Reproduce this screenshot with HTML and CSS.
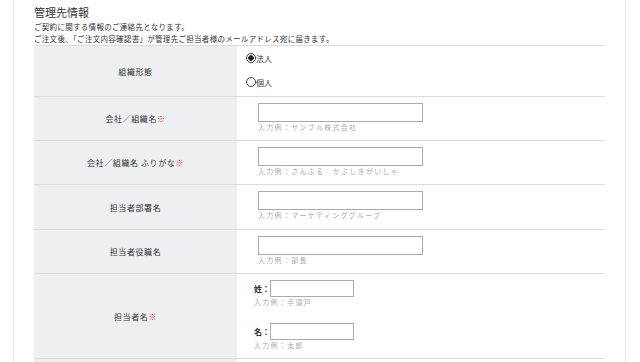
FILE: index.html
```html
<!DOCTYPE html>
<html>
<head>
<meta http-equiv="Content-Type" content="text/html; charset=UTF-8">
<meta name="viewport" content="width=device-width, initial-scale=1.0">
<title>管理先情報</title>
<link rel="stylesheet" href="styles.css">
</head>
<body>
<div class='page'>
    <h2 class='title'>管理先情報</h2>
    <p class='lead'>ご契約に関する情報のご連絡先となります。<br>ご注文後、「ご注文内容確認書」が管理先ご担当者様のメールアドレス宛に届きます。</p>

    <div class='form'>
        <div class='row row-type'>
            <div class='label'>組織形態</div>
            <div class='value radios'>
                <label><input type='radio' name='org_type' checked>法人</label>
                <label><input type='radio' name='org_type'>個人</label>
            </div>
        </div>
        <div class='row'>
            <div class='label'>会社／組織名<span class='req'>※</span></div>
            <div class='value'>
                <input class='text'>
                <div class='hint'>入力例：サンプル株式会社</div>
            </div>
        </div>
        <div class='row'>
            <div class='label'>会社／組織名 ふりがな<span class='req'>※</span></div>
            <div class='value'>
                <input class='text'>
                <div class='hint'>入力例：さんぷる　かぶしきがいしゃ</div>
            </div>
        </div>
        <div class='row row-tall'>
            <div class='label'>担当者部署名</div>
            <div class='value'>
                <input class='text'>
                <div class='hint'>入力例：マーケティンググループ</div>
            </div>
        </div>
        <div class='row'>
            <div class='label'>担当者役職名</div>
            <div class='value'>
                <input class='text'>
                <div class='hint'>入力例：部長</div>
            </div>
        </div>
        <div class='row row-name'>
            <div class='label'>担当者名<span class='req'>※</span></div>
            <div class='value names'>
                <div class='name'>
                    <span class='name-key'>姓：</span><input class='text short'>
                    <div class='hint'>入力例：手須戸</div>
                </div>
                <div class='name'>
                    <span class='name-key'>名：</span><input class='text short'>
                    <div class='hint'>入力例：太郎</div>
                </div>
            </div>
        </div>
        <div class='row'>
            <div class='label'></div>
            <div class='value'></div>
        </div>
    </div>
</div>
</body>
</html>
```

FILE: styles.css
```css
body {
    margin: 0;
    font-family: "Noto Sans CJK JP", "Noto Sans", sans-serif;
    color: #333;
    background-color: #fff;
}

.page {
    margin-left: 13px;
    width: 571px;
    padding: 4px 20px 0 20px;
    border-left: 1px solid #e8e8e8;
    border-right: 1px solid #e8e8e8;
}

.title {
    margin: 0;
    font-size: 11px;
    font-weight: normal;
    line-height: 16px;
}

.lead {
    margin: 1px 0 0 0;
    font-size: 7.5px;
    line-height: 12px;
    letter-spacing: 0.3px;
}

.form {
    border-top: 1px solid #dcdcdc;
}

.row {
    display: grid;
    grid-template-columns: 203px 1fr;
    height: 43px;
    border-bottom: 1px solid #dcdcdc;
}

.row-type {
    height: 50px;
}

.row-tall {
    height: 44px;
}

.row-name {
    height: 84px;
}

.label {
    display: flex;
    align-items: center;
    justify-content: center;
    background-color: #eeeff0;
    font-size: 8px;
    letter-spacing: 0.6px;
}

.req {
    color: #c8383e;
}

.value {
    padding: 6px 0 0 21px;
}

.radios {
    display: flex;
    flex-direction: column;
    gap: 12px;
    padding-left: 9px;
}

.radios label {
    display: flex;
    align-items: center;
    height: 12px;
    font-size: 8px;
}

.radios input {
    appearance: none;
    width: 10px;
    height: 10px;
    margin: 0;
    border: 1px solid #444;
    border-radius: 50%;
    background-color: #fff;
}

.radios input:checked {
    background: radial-gradient(circle, #222 0, #222 2.5px, #fff 3px);
}

.text {
    display: block;
    box-sizing: border-box;
    width: 165px;
    height: 19px;
    margin: 0;
    border: 1px solid #aaa;
    background-color: #fff;
}

.hint {
    font-size: 7px;
    line-height: 11px;
    letter-spacing: 1.3px;
    color: #aaa;
}

.names {
    padding-top: 6px;
    padding-left: 17px;
}

.name {
    display: grid;
    grid-template-columns: auto auto;
    justify-content: start;
    align-items: center;
}

.name + .name {
    margin-top: 15px;
}

.name-key {
    font-size: 8px;
    font-weight: bold;
}

.text.short {
    width: 84px;
    height: 17px;
}

.name .hint {
    grid-column: 1 / 3;
}
```
